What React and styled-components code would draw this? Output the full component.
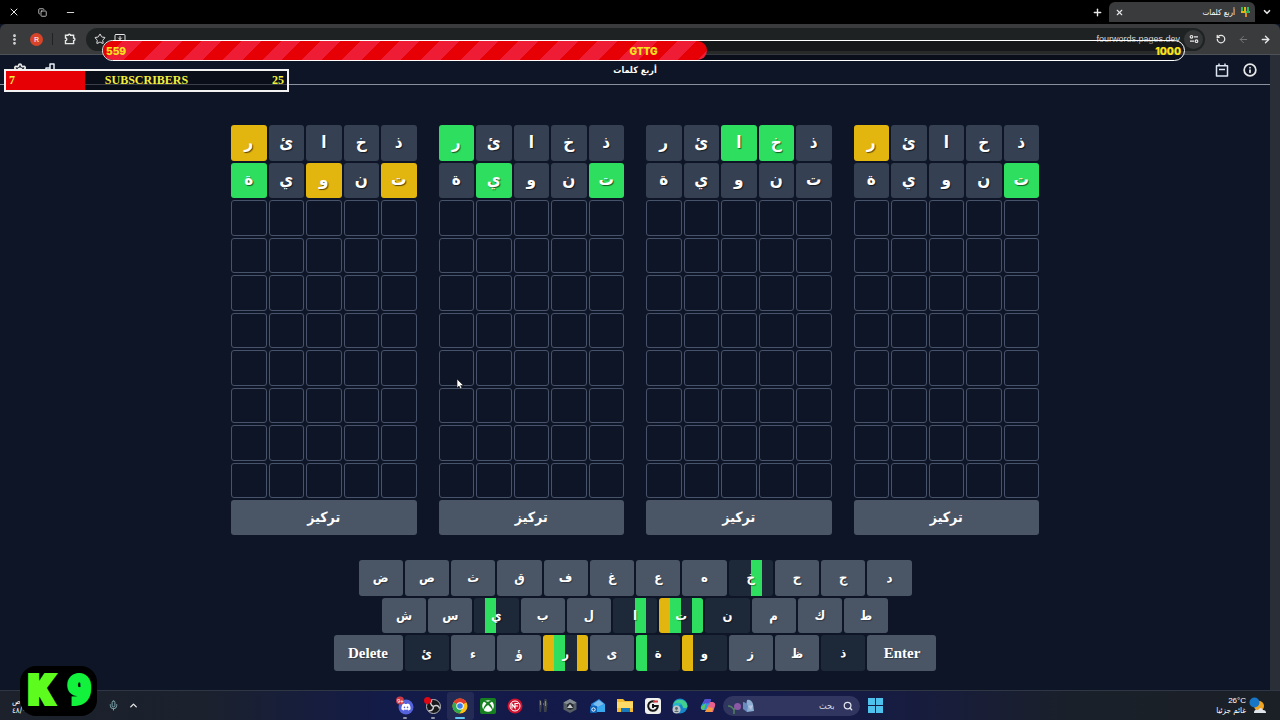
import React from "react";
import styled, { createGlobalStyle, css } from "styled-components";
import {
  X, Copy, Minus, Plus, ChevronDown, ChevronUp, Star, MonitorDown, RotateCcw,
  ArrowLeft, ArrowRight, Settings, Info, Mic, Search, EllipsisVertical,
} from "lucide-react";
import { FaDiscord, FaXbox } from "react-icons/fa";

const GlobalStyle = createGlobalStyle`
  *, *::before, *::after { box-sizing: border-box; }
  body { margin: 0; background: #0e1526; color: #fff; font-family: "Liberation Serif", "DejaVu Sans", serif; }
  button, input { font: inherit; color: inherit; border: 0; padding: 0; background: none; outline: 0; }
  svg { display: block; flex: none; }
`;

const Desktop = styled.div`
  position: relative;
  min-height: 100vh;
  display: flex;
  flex-direction: column;
  overflow: hidden;
`;

/* Browser chrome */
const TabStrip = styled.div`
  display: flex;
  align-items: center;
  justify-content: space-between;
  height: 24px;
  padding: 0 5px 0 6px;
  background: #000;
`;
const Group = styled.div`
  display: flex;
  align-items: center;
  gap: ${(p) => p.$gap || 0}px;
`;
const IconButton = styled.button`
  display: grid;
  place-items: center;
  width: 16px;
  height: 16px;
  color: ${(p) => (p.$dim ? "#77797b" : "#e8e8e8")};
`;
const Tab = styled.div`
  align-self: flex-end;
  display: flex;
  align-items: center;
  gap: 5px;
  width: 146px;
  height: 20px;
  padding: 0 5px 0 2px;
  border-radius: 6px 6px 0 0;
  background: #3a3b3c;
`;
const TabTitle = styled.span`
  flex: 1;
  font: 8px "DejaVu Sans Condensed", "DejaVu Sans", sans-serif;
  text-align: right;
`;
const Toolbar = styled.div`
  display: flex;
  align-items: center;
  gap: 8px;
  height: 31px;
  padding: 0 7px 0 6px;
  border-radius: 6px 6px 0 0;
  border-bottom: 1px solid #4d5258;
  background: #3a3b3c;
`;
const Avatar = styled.button`
  width: 13px;
  height: 13px;
  border-radius: 50%;
  background: #d8442a;
  font: 8px "Roboto", sans-serif;
`;
const Divider = styled.span`
  width: 1px;
  height: 12px;
  background: #222;
`;
const AddressBar = styled.div`
  flex: 1;
  display: flex;
  align-items: center;
  gap: 4px;
  height: 23px;
  padding: 0 2px 0 6px;
  border-radius: 12px;
  background: #1f2223;
`;
const AddressInput = styled.input`
  flex: 1;
  min-width: 0;
  font: 9px "Liberation Sans", sans-serif;
  text-align: right;
  color: #d4d6d8;
`;
const SiteInfo = styled.button`
  display: grid;
  place-items: center;
  width: 19px;
  height: 19px;
  border-radius: 50%;
  background: #353738;
`;

/* Game page */
const arabicFont = `"DejaVu Sans Condensed", "DejaVu Sans", sans-serif`;
const Viewport = styled.div`
  flex: 1;
  display: flex;
`;
const Scrollbar = styled.div`
  width: 10px;
  background: #2a2e36;
`;
const Page = styled.div`
  flex: 1;
  display: flex;
  flex-direction: column;
  align-items: center;
`;
const PageHeader = styled.header`
  align-self: stretch;
  display: grid;
  grid-template-columns: 1fr auto 1fr;
  align-items: center;
  height: 30px;
  padding: 0 12px;
  border-bottom: 1px solid #8a909c;
`;
const HeaderSide = styled.div`
  display: flex;
  gap: 12px;
  justify-content: ${(p) => (p.$end ? "flex-end" : "flex-start")};
`;
const Title = styled.h1`
  margin: 0;
  font: bold 9px ${arabicFont};
`;
const Boards = styled.main`
  display: grid;
  grid-template-columns: repeat(4, 1fr);
  gap: 22px;
  width: 100%;
  max-width: 808px;
  margin-top: 40px;
`;
const Board = styled.section`
  display: flex;
  flex-direction: column;
  gap: 2px;
`;
const Guess = styled.div`
  display: grid;
  grid-template-columns: repeat(5, 1fr);
  gap: 2px;
  direction: rtl;
`;
const fills = { g: "#2edf5f", y: "#e3b50f", n: "#354153" };
const Tile = styled.div`
  display: grid;
  place-items: center;
  aspect-ratio: 1;
  padding-bottom: 2px;
  border-radius: 3px;
  font: bold 17px/20px ${arabicFont};
  text-shadow: 1px 1px 1px rgba(0, 0, 0, 0.6);
  ${(p) => p.$state
    ? css`background: ${fills[p.$state]};`
    : css`border: 1px solid #47536a;`}
`;
const FocusButton = styled.button`
  height: 35px;
  padding-bottom: 2px;
  border-radius: 3px;
  background: #4a5666;
  font: bold 14px/20px ${arabicFont};
`;
const Keyboard = styled.div`
  display: grid;
  grid-template-rows: repeat(3, 1fr);
  justify-items: center;
  gap: 2px;
  width: 100%;
  height: 111px;
  margin: 25px 0 17px;
`;
const KeyRow = styled.div`
  display: flex;
  gap: 2px;
  width: 100%;
  max-width: ${(p) => p.$max}px;
`;
const keyFills = { g: "#2edf5f", y: "#e3b50f", n: "#1d2838" };
const quarters = (marks) =>
  `linear-gradient(to right, ${marks
    .split("")
    .map((m, i) => `${keyFills[m]} ${i * 25}% ${i * 25 + 25}%`)
    .join(", ")})`;
const Key = styled.button`
  flex: ${(p) => (p.$wide ? "0 0 69px" : "1 1 0")};
  border-radius: 3px;
  background: ${(p) => (p.$marks ? quarters(p.$marks) : "#4a5666")};
  font: ${(p) => (p.$wide ? `bold 15px "Liberation Serif", serif` : `bold 13px ${arabicFont}`)};
  text-shadow: 1px 1px 1px rgba(0, 0, 0, 0.35);
`;

/* Stream overlays */
const GoalBar = styled.div`
  position: absolute;
  top: 40px;
  left: 102px;
  right: 95px;
  height: 21px;
  border: 1px solid #fff;
  border-radius: 11px;
  background: rgba(0, 0, 0, 0.3);
  overflow: hidden;
`;
const GoalFill = styled.div`
  height: 100%;
  border-radius: 0 10px 10px 0;
  background: repeating-linear-gradient(135deg, #e60005 0 14px, #ee1c34 14px 28px);
`;
const GoalLabels = styled.div`
  position: absolute;
  inset: 0;
  display: grid;
  grid-template-columns: 1fr auto 1fr;
  align-items: center;
  padding: 0 3px;
  color: ${(p) => p.$color || "#f7e01c"};
  font: ${(p) => p.$font};
  & > :last-child { text-align: right; }
`;
const SubBar = styled.div`
  position: absolute;
  top: 69px;
  left: 4px;
  width: 285px;
  height: 23px;
  border: 2px solid #f2f2f2;
  background: rgba(8, 10, 16, 0.6);
`;
const SubFill = styled.div`
  height: 100%;
  background: #e60005;
`;
const Badge = styled.div`
  position: absolute;
  left: 20px;
  bottom: 4px;
  display: flex;
  align-items: center;
  justify-content: space-between;
  width: 77px;
  height: 50px;
  padding: 0 6px 0 8px;
  border-radius: 16px;
  background: #000;
  font: 900 40px/46px "Roboto", sans-serif;
  color: #5dfb1e;
  -webkit-text-stroke: 4px currentColor;
`;
const BadgeNumber = styled.span`
  color: #12f23c;
`;
const Cursor = styled.svg`
  position: absolute;
  left: 456px;
  top: 378px;
`;

/* Taskbar */
const Taskbar = styled.footer`
  display: grid;
  grid-template-columns: 1fr auto 1fr;
  align-items: center;
  height: 30px;
  padding: 0 14px 0 9px;
  border-top: 1px solid #2f3644;
  background: linear-gradient(to right, #1c212b 0, #1b212d 16%, #131b48 30%, #141a4b 50%, #161b44 68%, #1a2029 84%, #1b2027 100%);
`;
const Clock = styled.div`
  width: 96px;
  padding-left: 3px;
  font: 8px/9px ${arabicFont};
`;
const Apps = styled.div`
  display: grid;
  grid-template-columns: repeat(12, 1fr);
  width: 330px;
`;
const AppButton = styled.button`
  position: relative;
  display: grid;
  place-items: center;
  height: 28px;
  border-radius: 3px;
  background: ${(p) => (p.$active ? "rgba(255,255,255,.07)" : "none")};
  &::after {
    content: "";
    position: absolute;
    bottom: 1px;
    width: ${(p) => (p.$active ? 10 : 4)}px;
    height: 2px;
    border-radius: 1px;
    background: ${(p) => (p.$active ? "#5fc8f2" : p.$running ? "#9094a8" : "transparent")};
  }
`;
const SearchBox = styled.label`
  display: flex;
  align-items: center;
  gap: 8px;
  width: 137px;
  height: 20px;
  margin: 0 8px 0 1px;
  padding: 0 7px 0 4px;
  border-radius: 10px;
  background: #30365f;
`;
const SearchInput = styled.input`
  flex: 1;
  min-width: 0;
  font: 9px ${arabicFont};
  text-align: start;
  &::placeholder { color: #d6d8e4; opacity: 1; }
`;
const Weather = styled.div`
  display: flex;
  align-items: center;
  justify-content: flex-end;
  gap: 3px;
  text-align: right;
  font: 8px/10px "Liberation Sans", ${arabicFont};
`;

const guesses = ["ذخائر", "تنوية"];
const boards = [
  ["nnnny", "ynyng"],
  ["nnnng", "gnngn"],
  ["nggnn", "nnnnn"],
  ["nnnny", "gnnnn"],
];
const keyRows = [
  { max: 553, keys: [["ض"], ["ص"], ["ث"], ["ق"], ["ف"], ["غ"], ["ع"], ["ه"], ["خ", "nngn"], ["ح"], ["ج"], ["د"]] },
  { max: 506, keys: [["ش"], ["س"], ["ي", "ngnn"], ["ب"], ["ل"], ["ا", "nngn"], ["ت", "ygng"], ["ن", "nnnn"], ["م"], ["ك"], ["ط"]] },
  { max: 603, keys: [["Delete"], ["ئ", "nnnn"], ["ء"], ["ؤ"], ["ر", "ygny"], ["ى"], ["ة", "gnnn"], ["و", "ynnn"], ["ز"], ["ظ"], ["ذ", "nnnn"], ["Enter"]] },
];

const PuzzleIcon = () => (
  <svg width="12" height="12" viewBox="0 0 12 12" fill="none" stroke="#e8e8e8" strokeWidth="1.4">
    <path d="M1.5 2.300h2.500a1.300 1.100 0 0 1 2.600 0h3v2.700a1.300 1.300 0 0 1 0 2.600v3h-8.100v-3a1.300 1.300 0 0 0 0-2.600z" />
  </svg>
);
const TuneIcon = () => (
  <svg width="10" height="10" viewBox="0 0 10 10" fill="none" stroke="#e8e8e8" strokeWidth="1.2">
    <circle cx="2.5" cy="2.8" r="1.3" /><path d="M5 2.8h4M1 7.2h4" /><circle cx="7.5" cy="7.2" r="1.3" />
  </svg>
);
const Favicon = () => (
  <svg width="10" height="12" viewBox="0 0 10 12" fill="none" strokeWidth="2">
    <path d="M2 1v4M8 1v4" stroke="#35b55c" /><path d="M5 1v5M1 6h5" stroke="#e3b50f" />
    <path d="M6 6h4" stroke="#35b55c" /><path d="M6 7v4" stroke="#d98a25" />
  </svg>
);
const StatsIcon = () => (
  <svg width="14" height="14" viewBox="0 0 14 14" fill="none" stroke="#e8edf5" strokeWidth="1.5" strokeLinejoin="round">
    <path d="M1 9h4v4H1zM5 5h4v8H5zM9 1h4v12H9z" />
  </svg>
);
const CalendarIcon = () => (
  <svg width="14" height="14" viewBox="0 0 14 14" fill="none" stroke="#dce5f2" strokeWidth="1.5" strokeLinejoin="round">
    <path d="M1.500 2.800h11v10.200h-11zM4 6.500h6M4 .5v2.500M10 .5v2.500" />
  </svg>
);

const DiscordIcon = () => (
  <svg width="20" height="20" viewBox="0 0 20 20">
    <circle cx="11" cy="11" r="7.500" fill="#5562dc" />
    <FaDiscord x="6" y="6" size={10} color="#fff" />
    <circle cx="5" cy="4.500" r="4" fill="#c93b49" />
    <text x="2" y="7" fontSize="6" fontFamily="Roboto" fill="#fff">9+</text>
  </svg>
);
const ObsIcon = () => (
  <svg width="20" height="20" viewBox="0 0 20 20">
    <circle cx="10.500" cy="10.500" r="7" fill="#17181c" stroke="#b8b8bc" strokeWidth="1" />
    <g fill="none" stroke="#d0d0d3" strokeWidth="1.500">
      <path d="M10.500 10.500C7 9 7 6 9 4.500M10.500 10.500c3-2 5.500-.5 6 2M10.500 10.500c0 3.500-2.500 5-5 4" />
    </g>
    <circle cx="4.500" cy="4.500" r="3.500" fill="#e00712" />
  </svg>
);
const ChromeIcon = () => (
  <svg width="16" height="16" viewBox="0 0 16 16">
    <circle cx="8" cy="8" r="7.500" fill="#fbc116" />
    <path d="M8 8 1.500 4.250A7.500 7.500 0 0 1 14.500 4.250z" fill="#e33b2e" />
    <path d="M8 8 1.500 4.250A7.500 7.500 0 0 0 7.500 15.500l3.500-6z" fill="#2da94f" />
    <circle cx="8" cy="8" r="3.700" fill="#fff" /><circle cx="8" cy="8" r="2.800" fill="#3c7fe8" />
  </svg>
);
const XboxIcon = () => (
  <svg width="16" height="16" viewBox="0 0 16 16">
    <rect width="16" height="16" rx="2" fill="#168020" /><FaXbox x="2" y="2" size={12} color="#fff" />
  </svg>
);
const RedIcon = () => (
  <svg width="16" height="16" viewBox="0 0 16 16" fill="none" stroke="#fff">
    <circle cx="8" cy="8" r="7.500" fill="#cf1230" stroke="none" /><circle cx="8" cy="8" r="5" />
    <path d="M5 10.500V6l3 4V5.500h3.500M8 8h3" strokeWidth="1.200" />
  </svg>
);
const FiguresIcon = () => (
  <svg width="14" height="16" viewBox="0 0 14 16">
    <path d="M3 2h2l1 4-1 8H3.500L3 6zM8.500 1h2l1 5-1 8H8l-.5-7z" fill="#3c424a" /><path d="M4.500 3v4M9.500 3v5M7 6h1" stroke="#8a897c" />
  </svg>
);
const HexIcon = () => (
  <svg width="14" height="14" viewBox="0 0 14 14">
    <path d="M7 0l6.500 3.500v7L7 14 .5 10.500v-7z" fill="#555d65" /><path d="M7 0l6.500 3.500L7 7 .5 3.500z" fill="#858d94" />
    <path d="M7 3.500l3.500 2v4L7 11 4 9.500v-4z" fill="#25292e" /><path d="M7 5l3 4H4z" fill="#c3c8cc" />
  </svg>
);
const MailIcon = () => (
  <svg width="16" height="16" viewBox="0 0 16 16">
    <path d="M1 6 9 1l6 5v8H2z" fill="#2686dc" /><path d="M3 6l6-4 5 4-6 3z" fill="#79bdf0" />
    <path d="M2 14l6-5 7-3v8z" fill="#38a8ef" /><rect y="8" width="7" height="7" rx="1" fill="#0c5fb2" />
    <circle cx="3.500" cy="11.500" r="1.700" fill="none" stroke="#fff" />
  </svg>
);
const FolderIcon = () => (
  <svg width="16" height="15" viewBox="0 0 16 15">
    <path d="M0 1h6l2 2h8v11H0z" fill="#f5bd35" /><path d="M0 4h16v6H0z" fill="#ffda67" /><path d="M4 10h9v4H4z" fill="#1979bd" />
  </svg>
);
const GIcon = () => (
  <svg width="16" height="16" viewBox="0 0 16 16" fill="none">
    <rect width="16" height="16" rx="3" fill="#f0f0ef" />
    <path d="M9.500 3.500A4.800 4.800 0 1 0 12.800 8H9" stroke="#161616" strokeWidth="2" /><path d="M8 6v4" stroke="#161616" strokeWidth="2" />
    <path d="M8 3.500h5" stroke="#db343b" strokeWidth="2" />
  </svg>
);
const EdgeIcon = () => (
  <svg width="16" height="16" viewBox="0 0 16 16">
    <circle cx="8" cy="8" r="7.500" fill="#1685c9" /><path d="M1 7A7.500 7.500 0 0 1 15.500 8c0 3-5 3-5 0C10 5 5 4 1 7z" fill="#43cf8d" />
    <path d="M1 7c2-3 8-3 9 0-3-1-4 2-3 4-3 0-5-2-6-4z" fill="#25b6cc" />
    <circle cx="4.500" cy="11.500" r="4" fill="#bfc6ca" /><circle cx="4.500" cy="10.500" r="1.400" fill="#59646c" /><path d="M2 14q2.500-3 5 0z" fill="#59646c" />
  </svg>
);
const CopilotIcon = () => (
  <svg width="16" height="16" viewBox="0 0 16 16">
    <path d="M5 1h6L8 12H3Q0 12 1 8z" fill="#269be0" /><path d="M5 1h6l-1 4-7 1z" fill="#554cd2" />
    <path d="M10 4h3q3 1 2 4l-2 6H5z" fill="#e7618e" /><path d="M1 9l5-4-2 7q-3 0-3-3z" fill="#58c85e" /><path d="M5 14l3-5 5 1-1 4z" fill="#f39a3f" />
  </svg>
);
const WindowsIcon = () => (
  <svg width="15" height="15" viewBox="0 0 15 15" fill="#4fc1ed"><path d="M0 0h7v7H0zM8 0h7v7H8zM0 8h7v7H0zM8 8h7v7H8z" /></svg>
);
const ButterflyIcon = () => (
  <svg width="30" height="18" viewBox="0 0 30 18" fill="none">
    <path d="M1 9q4 0 6 4 2-4 5-3M7 11v6" stroke="#4f8061" strokeWidth="1.500" /><circle cx="10.500" cy="9.500" r="3.500" fill="#8a58a7" />
    <path d="M19 9l1-6q4-1 6 4l1 7-7 1z" fill="#8caed3" /><path d="M16 5q3 0 5 4l-1 6-4-3z" fill="#698bc0" /><path d="M21 9l5-1-2 5z" fill="#b7c5df" />
  </svg>
);
const WeatherIcon = () => (
  <svg width="17" height="18" viewBox="0 0 17 18">
    <circle cx="10" cy="9" r="5" fill="#f1a623" /><path d="M5 16q0-4 4-3 3-4 5 0 3 0 3 3z" fill="#e0e5ec" />
    <circle cx="5.500" cy="5.500" r="5" fill="#1976c5" />
  </svg>
);

const apps = [
  ["Discord", DiscordIcon, "running"], ["OBS Studio", ObsIcon, "running"], ["Chrome", ChromeIcon, "active"],
  ["Xbox", XboxIcon], ["NordVPN", RedIcon], ["Game", FiguresIcon], ["Launcher", HexIcon], ["Outlook", MailIcon],
  ["Files", FolderIcon], ["G Hub", GIcon], ["Edge", EdgeIcon], ["Copilot", CopilotIcon],
];

export default function App() {
  return (
    <Desktop>
      <GlobalStyle />
      <TabStrip>
        <Group $gap={12}>
          <IconButton aria-label="Close window"><X size={12} /></IconButton>
          <IconButton aria-label="Restore window"><Copy size={9} /></IconButton>
          <IconButton aria-label="Minimize window"><Minus size={11} /></IconButton>
        </Group>
        <Group $gap={4}>
          <IconButton aria-label="New tab"><Plus size={11} strokeWidth={3} /></IconButton>
          <Tab>
            <IconButton aria-label="Close tab"><X size={9} strokeWidth={3} /></IconButton>
            <TabTitle dir="rtl">أربع كلمات</TabTitle>
            <Favicon />
          </Tab>
          <IconButton aria-label="Search tabs"><ChevronDown size={10} strokeWidth={4} /></IconButton>
        </Group>
      </TabStrip>
      <Toolbar>
        <Group $gap={9}>
          <Group $gap={8}>
            <IconButton aria-label="Menu"><EllipsisVertical size={13} strokeWidth={3} /></IconButton>
            <Avatar>R</Avatar>
          </Group>
          <Divider />
          <IconButton aria-label="Extensions"><PuzzleIcon /></IconButton>
        </Group>
        <AddressBar>
          <IconButton aria-label="Bookmark"><Star size={12} /></IconButton>
          <IconButton aria-label="Install"><MonitorDown size={12} /></IconButton>
          <AddressInput aria-label="Address" defaultValue="fourwords.pages.dev" />
          <SiteInfo aria-label="Site information"><TuneIcon /></SiteInfo>
        </AddressBar>
        <Group $gap={6}>
          <IconButton aria-label="Reload"><RotateCcw size={10} strokeWidth={3} /></IconButton>
          <IconButton $dim aria-label="Forward"><ArrowLeft size={11} /></IconButton>
          <IconButton aria-label="Back"><ArrowRight size={11} strokeWidth={3} /></IconButton>
        </Group>
      </Toolbar>

      <Viewport>
        <Page>
          <PageHeader>
            <HeaderSide>
              <IconButton aria-label="Settings"><Settings size={14} strokeWidth={3} /></IconButton>
              <IconButton aria-label="Statistics"><StatsIcon /></IconButton>
            </HeaderSide>
            <Title dir="rtl">أربع كلمات</Title>
            <HeaderSide $end>
              <IconButton aria-label="Calendar"><CalendarIcon /></IconButton>
              <IconButton aria-label="Help"><Info size={14} strokeWidth={3} /></IconButton>
            </HeaderSide>
          </PageHeader>
          <Boards>
            {boards.map((marks, b) => (
              <Board key={b}>
                {Array.from({ length: 10 }, (_, r) => (
                  <Guess key={r}>
                    {Array.from({ length: 5 }, (_, c) => (
                      <Tile key={c} $state={marks[r]?.[c]}>{guesses[r]?.[c]}</Tile>
                    ))}
                  </Guess>
                ))}
                <FocusButton>تركيز</FocusButton>
              </Board>
            ))}
          </Boards>
          <Keyboard>
            {keyRows.map((row) => (
              <KeyRow key={row.max} $max={row.max}>
                {row.keys.map(([label, marks]) => (
                  <Key key={label} $marks={marks} $wide={label.length > 1}>{label}</Key>
                ))}
              </KeyRow>
            ))}
          </Keyboard>
        </Page>
        <Scrollbar />
      </Viewport>

      <Taskbar>
        <Group>
          <Clock><div>ص</div><div>٤٨/٠</div></Clock>
          <Group $gap={4}>
            <IconButton aria-label="Microphone"><Mic size={11} color="#86b0b8" /></IconButton>
            <IconButton aria-label="Hidden icons"><ChevronUp size={11} strokeWidth={3} /></IconButton>
          </Group>
        </Group>
        <Group>
          <Apps>
            {apps.map(([name, Icon, state]) => (
              <AppButton key={name} aria-label={name} $active={state === "active"} $running={state === "running"}><Icon /></AppButton>
            ))}
          </Apps>
          <SearchBox>
            <ButterflyIcon />
            <SearchInput dir="rtl" placeholder="بحث" aria-label="بحث" />
            <Search size={10} color="#e0e2ec" strokeWidth={3} />
          </SearchBox>
          <IconButton aria-label="Start"><WindowsIcon /></IconButton>
        </Group>
        <Weather>
          <div><div>26°C</div><div dir="rtl">غائم جزئيا</div></div>
          <WeatherIcon />
        </Weather>
      </Taskbar>

      <GoalBar>
        <GoalFill style={{ width: "55.9%" }} />
        <GoalLabels $font={`900 10px "Inter", sans-serif`}><span>559</span><span>GTTG</span><span>1000</span></GoalLabels>
      </GoalBar>
      <SubBar>
        <SubFill style={{ width: "28%" }} />
        <GoalLabels $color="#f4f03c" $font={`bold 12px "Liberation Serif", serif`}><span>7</span><span>SUBSCRIBERS</span><span>25</span></GoalLabels>
      </SubBar>
      <Badge><span>K</span><BadgeNumber>9</BadgeNumber></Badge>
      <Cursor width="8" height="12" viewBox="0 0 8 12"><path d="M1 1v9l2-2 1.500 3 1.500-.8L4.700 7.500H7.500z" fill="#fff" stroke="#111" strokeWidth=".6" /></Cursor>
    </Desktop>
  );
}
